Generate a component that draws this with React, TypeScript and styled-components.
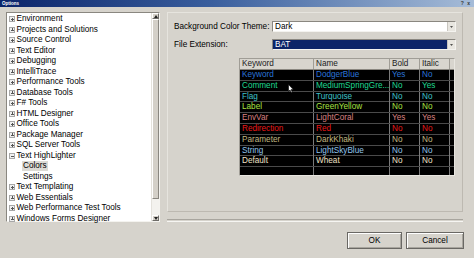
import React from 'react';
import styled, { createGlobalStyle } from 'styled-components';

type Entry = {
	keyword: string;
	name: string;
	color: string;
	bold: boolean;
	italic: boolean;
};

const entries: Entry[] = [
	{ keyword: 'Keyword', name: 'DodgerBlue', color: '#2a74d8', bold: true, italic: false },
	{ keyword: 'Comment', name: 'MediumSpringGre...', color: '#1fd890', bold: false, italic: true },
	{ keyword: 'Flag', name: 'Turquoise', color: '#3fc0c8', bold: false, italic: false },
	{ keyword: 'Label', name: 'GreenYellow', color: '#a8e040', bold: false, italic: false },
	{ keyword: 'EnvVar', name: 'LightCoral', color: '#d88080', bold: true, italic: true },
	{ keyword: 'Redirection', name: 'Red', color: '#e81818', bold: false, italic: false },
	{ keyword: 'Parameter', name: 'DarkKhaki', color: '#c0b880', bold: false, italic: false },
	{ keyword: 'String', name: 'LightSkyBlue', color: '#90c4ec', bold: false, italic: false },
	{ keyword: 'Default', name: 'Wheat', color: '#f0e2c6', bold: false, italic: false },
];

type Node = { label: string; open?: boolean; child?: boolean; selected?: boolean };

const tree: Node[] = [
	{ label: 'Environment' },
	{ label: 'Projects and Solutions' },
	{ label: 'Source Control' },
	{ label: 'Text Editor' },
	{ label: 'Debugging' },
	{ label: 'IntelliTrace' },
	{ label: 'Performance Tools' },
	{ label: 'Database Tools' },
	{ label: 'F# Tools' },
	{ label: 'HTML Designer' },
	{ label: 'Office Tools' },
	{ label: 'Package Manager' },
	{ label: 'SQL Server Tools' },
	{ label: 'Text HighLighter', open: true },
	{ label: 'Colors', child: true, selected: true },
	{ label: 'Settings', child: true },
	{ label: 'Text Templating' },
	{ label: 'Web Essentials' },
	{ label: 'Web Performance Test Tools' },
	{ label: 'Windows Forms Designer' },
];

const yesNo = (v: boolean) => (v ? 'Yes' : 'No');

const App = () => {
	return (
		<>
			<GlobalStyle />
			<Window>
				<TitleBar>
					<span>Options</span>
					<TitleButtons>? x</TitleButtons>
				</TitleBar>
				<Main>
					<Tree>
						<TreeList>
							{tree.map((node) => (
								<TreeRow key={node.label} $child={node.child}>
									{!node.child && <Expander $open={node.open} />}
									<TreeLabel $selected={node.selected}>{node.label}</TreeLabel>
								</TreeRow>
							))}
						</TreeList>
						<ScrollBar>
							<ScrollArrow>
								<svg width="4" height="3" viewBox="0 0 4 3">
									<path d="M0 3 L2 0 L4 3 Z" fill="#222" />
								</svg>
							</ScrollArrow>
							<ScrollThumb />
							<ScrollTrack />
							<ScrollArrow>
								<svg width="4" height="3" viewBox="0 0 4 3">
									<path d="M0 0 L2 3 L4 0 Z" fill="#222" />
								</svg>
							</ScrollArrow>
						</ScrollBar>
					</Tree>
					<RightColumn>
						<Panel>
							<FieldGrid>
								<FieldLabel>Background Color Theme:</FieldLabel>
								<Select>
									<SelectValue>Dark</SelectValue>
									<SelectArrow>
										<svg width="3" height="2" viewBox="0 0 4 2">
											<path d="M0 0 L2 2 L4 0 Z" fill="#222" />
										</svg>
									</SelectArrow>
								</Select>
								<FieldLabel>File Extension:</FieldLabel>
								<Select>
									<SelectValue $active>BAT</SelectValue>
									<SelectArrow>
										<svg width="3" height="2" viewBox="0 0 4 2">
											<path d="M0 0 L2 2 L4 0 Z" fill="#222" />
										</svg>
									</SelectArrow>
								</Select>
							</FieldGrid>
							<Table>
								<HeaderRow>
									<HeaderCell>Keyword</HeaderCell>
									<HeaderCell>Name</HeaderCell>
									<HeaderCell>Bold</HeaderCell>
									<HeaderCell>Italic</HeaderCell>
									<HeaderCell />
								</HeaderRow>
								{entries.map((e) => (
									<DataRow key={e.keyword} $color={e.color}>
										<Cell>{e.keyword}</Cell>
										<Cell>{e.name}</Cell>
										<Cell>{yesNo(e.bold)}</Cell>
										<Cell>{yesNo(e.italic)}</Cell>
										<Cell />
									</DataRow>
								))}
								<EmptyRow>
									<Cell />
									<Cell />
									<Cell />
									<Cell />
									<Cell />
								</EmptyRow>
								<Cursor width="6" height="9" viewBox="0 0 6 9">
									<path d="M0.5 0.5 L0.5 7.5 L2 6 L3.3 8.5 L4.3 8 L3.1 5.6 L5.3 5.6 Z" fill="#fff" stroke="#000" strokeWidth="0.6" />
								</Cursor>
							</Table>
						</Panel>
						<Separator />
					</RightColumn>
				</Main>
				<Footer>
					<Button $width={55}>OK</Button>
					<Button $width={58}>Cancel</Button>
				</Footer>
			</Window>
		</>
	);
};

export default App;

const GlobalStyle = createGlobalStyle`
	html, body {
		margin: 0;
		padding: 0;
		background: #d4d0c8;
	}
	body {
		font-family: 'Liberation Sans', Arial, sans-serif;
		font-size: 8.2px;
		color: #000;
	}
`;

const Window = styled.div`
	width: 474px;
	height: 258px;
	display: flex;
	flex-direction: column;
	background: #d6d3cc;
	overflow: hidden;
`;

const TitleBar = styled.div`
	height: 7px;
	display: flex;
	align-items: center;
	justify-content: space-between;
	padding: 0 3px 0 2px;
	background: linear-gradient(to right, #0a246a 0%, #3a5f9e 45%, #a6bcd8 100%);
	color: #fff;
	font-size: 4.5px;
	line-height: 7px;
	font-weight: bold;
`;

const TitleButtons = styled.span`
	color: #333;
	font-size: 5px;
	letter-spacing: 1px;
`;

const Main = styled.div`
	display: flex;
	padding: 5px 0 0 6px;
	height: 210px;
`;

const Tree = styled.div`
	width: 154px;
	height: 210px;
	box-sizing: border-box;
	display: flex;
	background: #fff;
	border-top: 1px solid #8a8780;
	border-left: 1px solid #8a8780;
	border-bottom: 1px solid #f4f3ef;
	border-right: 1px solid #f4f3ef;
`;

const TreeList = styled.div`
	flex: 1;
	padding: 1px 0 0 2px;
`;

const TreeRow = styled.div<{ $child?: boolean }>`
	height: 10.5px;
	display: flex;
	align-items: center;
	padding-left: ${(p) => (p.$child ? '13px' : '0')};
	white-space: nowrap;
`;

const Expander = styled.span<{ $open?: boolean }>`
	position: relative;
	width: 4px;
	height: 4px;
	margin-right: 0.5px;
	border: 0.5px solid #a8a8a8;
	background: #f0f0f0;
	&::before {
		content: '';
		position: absolute;
		left: 0.5px;
		right: 0.5px;
		top: 1.75px;
		height: 0.5px;
		background: #555;
	}
	&::after {
		content: '';
		display: ${(p) => (p.$open ? 'none' : 'block')};
		position: absolute;
		top: 0.5px;
		bottom: 0.5px;
		left: 1.75px;
		width: 0.5px;
		background: #555;
	}
`;

const TreeLabel = styled.span<{ $selected?: boolean }>`
	padding: 0 1px;
	line-height: 10px;
	background: ${(p) => (p.$selected ? '#dcdad4' : 'transparent')};
`;

const ScrollBar = styled.div`
	width: 7px;
	display: flex;
	flex-direction: column;
	background: #eeede8;
	border-left: 1px solid #e4e2dc;
`;

const ScrollArrow = styled.div`
	height: 6px;
	display: flex;
	align-items: center;
	justify-content: center;
	background: #d4d0c8;
	border: 1px solid;
	border-color: #fff #6e6c68 #6e6c68 #fff;
	box-sizing: border-box;
`;

const ScrollThumb = styled.div`
	height: 180px;
	background: #d4d0c8;
	border: 1px solid;
	border-color: #fff #8a8780 #8a8780 #fff;
	box-sizing: border-box;
`;

const ScrollTrack = styled.div`
	flex: 1;
	background: #f3f2ee;
`;

const RightColumn = styled.div`
	width: 296px;
	margin-left: 7px;
	display: flex;
	flex-direction: column;
`;

const Panel = styled.div`
	height: 201px;
	box-sizing: border-box;
	padding: 8px 6px 0 6px;
	border: 1px solid;
	border-color: #e6e4de #bdb9b1 #bdb9b1 #e6e4de;
`;

const FieldGrid = styled.div`
	display: grid;
	grid-template-columns: 98px 1fr;
	grid-auto-rows: 11px;
	row-gap: 7px;
	align-items: center;
`;

const FieldLabel = styled.span`
	white-space: nowrap;
`;

const Select = styled.div`
	height: 11px;
	display: flex;
	box-sizing: border-box;
	border: 1px solid;
	border-color: #8a8780 #f4f3ef #f4f3ef #8a8780;
	background: #fff;
`;

const SelectValue = styled.div<{ $active?: boolean }>`
	flex: 1;
	padding-left: 2px;
	line-height: 9px;
	color: ${(p) => (p.$active ? '#fff' : '#000')};
	background: ${(p) => (p.$active ? '#0c2468' : '#fff')};
`;

const SelectArrow = styled.div`
	width: 7px;
	display: flex;
	align-items: center;
	justify-content: center;
	background: #e8e6e0;
	border-left: 1px solid #c8c5be;
`;

const Table = styled.div`
	position: relative;
	width: 216px;
	height: 118px;
	margin: 8px 0 0 65px;
	box-sizing: border-box;
	background: #000;
	border: 1px solid #a09d96;
	border-bottom-color: #e8e6e0;
	border-right-color: #e8e6e0;
	display: flex;
	flex-direction: column;
`;

const columns = '74px 76px 30px 30px 1fr';

const HeaderRow = styled.div`
	height: 11px;
	flex-shrink: 0;
	display: grid;
	grid-template-columns: ${columns};
	background: #d8d5ce;
	color: #222;
	border-bottom: 1px solid #8a8780;
	box-sizing: border-box;
`;

const HeaderCell = styled.div`
	padding-left: 2px;
	line-height: 10px;
	border-right: 1px solid #a09d96;
	&:last-child {
		border-right: none;
	}
`;

const DataRow = styled.div<{ $color: string }>`
	height: 10.8px;
	flex-shrink: 0;
	display: grid;
	grid-template-columns: ${columns};
	color: ${(p) => p.$color};
	border-bottom: 1px solid #4a4a4a;
	box-sizing: border-box;
`;

const EmptyRow = styled.div`
	flex: 1;
	display: grid;
	grid-template-columns: ${columns};
`;

const Cell = styled.div`
	padding-left: 2px;
	line-height: 10px;
	white-space: nowrap;
	border-right: 1px solid #7a7a7a;
	&:last-child {
		border-right: none;
	}
`;

const Cursor = styled.svg`
	position: absolute;
	left: 48px;
	top: 25px;
`;

const Separator = styled.div`
	margin-top: 7px;
	height: 1px;
	border-top: 1px solid #a8a59e;
	border-bottom: 1px solid #f6f5f2;
`;

const Footer = styled.div`
	display: flex;
	justify-content: flex-end;
	gap: 4px;
	padding: 10px 10px 0 0;
`;

const Button = styled.div<{ $width: number }>`
	width: ${(p) => p.$width}px;
	height: 17px;
	box-sizing: border-box;
	display: flex;
	align-items: center;
	justify-content: center;
	background: #d6d3cc;
	border: 1px solid #6a6864;
	box-shadow: inset 1px 1px 0 #fff, inset -1px -1px 0 #a8a59e;
`;
